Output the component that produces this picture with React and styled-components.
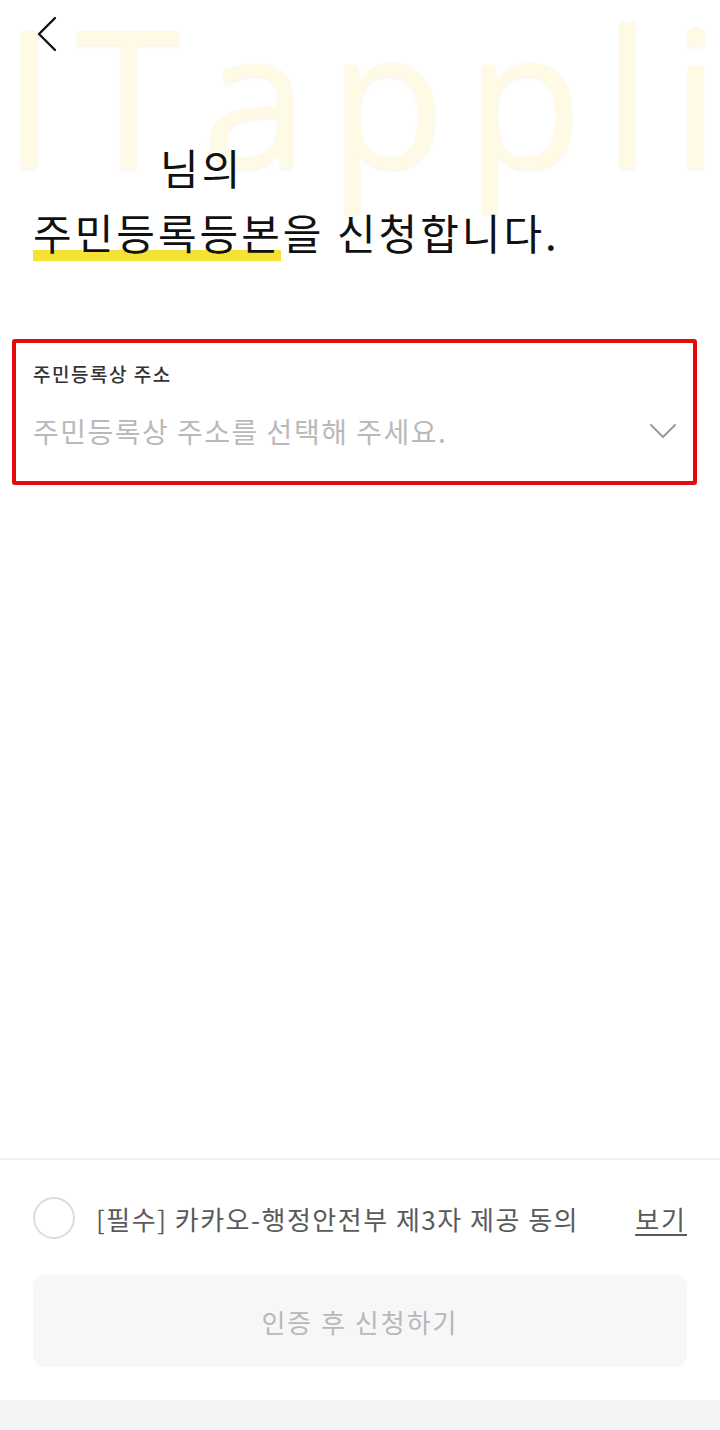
import React from "react";
import styled, { createGlobalStyle } from "styled-components";

const Global = createGlobalStyle`
  html, body {
    margin: 0;
    padding: 0;
    background: #ffffff;
  }
  body {
    font-family: "Noto Sans CJK KR", "Noto Sans", sans-serif;
    color: #111;
  }
`;

const Page = styled.div`
  position: relative;
  width: 720px;
  height: 1430px;
  display: flex;
  flex-direction: column;
  overflow: hidden;
  background: #fff;
`;

const Watermark = styled.div`
  position: absolute;
  left: 2px;
  top: -37px;
  font-family: "Open Sans", "Liberation Sans", sans-serif;
  font-size: 192px;
  font-weight: 400;
  letter-spacing: 20px;
  color: #fffae6;
  text-shadow: 0 2px 3px rgba(200, 190, 150, 0.16);
  pointer-events: none;
  white-space: nowrap;
  z-index: 0;
`;

const TopBar = styled.div`
  height: 68px;
  padding: 14px 0 0 30px;
  box-sizing: border-box;
  position: relative;
  z-index: 1;
`;

const Heading = styled.div`
  position: relative;
  z-index: 1;
  padding: 66px 0 0 33px;
  font-size: 42px;
  line-height: 65px;
  letter-spacing: 3px;
`;

const NameLine = styled.div`
  padding-left: 127px;
`;

const Marked = styled.span`
  position: relative;
  z-index: 0;

  &::after {
    content: "";
    position: absolute;
    left: 0;
    right: 2px;
    bottom: 1px;
    height: 11px;
    background: #f6e234;
    z-index: -1;
  }
`;

const SelectBox = styled.div`
  position: relative;
  z-index: 1;
  margin: 75px 23px 0 12px;
  border: 4px solid #e50a0a;
  border-radius: 3px;
  padding: 18px 16px 32px 17px;
  display: flex;
  flex-direction: column;
  gap: 26px;
`;

const FieldLabel = styled.div`
  font-size: 19px;
  font-weight: 500;
  color: #333;
  line-height: 26px;
  letter-spacing: 1.5px;
`;

const FieldRow = styled.div`
  display: flex;
  align-items: center;
  justify-content: space-between;
`;

const Placeholder = styled.div`
  font-size: 28px;
  color: #b9b9b9;
  line-height: 36px;
  letter-spacing: 1.5px;
`;

const Spacer = styled.div`
  flex: 1;
`;

const Footer = styled.div`
  border-top: 2px solid #f3f3f3;
  padding: 37px 33px 33px 33px;
  display: flex;
  flex-direction: column;
  gap: 36px;
`;

const AgreeRow = styled.div`
  display: flex;
  align-items: center;
`;

const Circle = styled.div`
  width: 38px;
  height: 38px;
  border: 2px solid #dcdcdc;
  border-radius: 50%;
  flex-shrink: 0;
`;

const AgreeText = styled.div`
  margin-left: 21px;
  font-size: 26px;
  color: #5a5a5a;
  letter-spacing: 1.5px;
  flex: 1;
`;

const ViewLink = styled.a`
  font-size: 26px;
  color: #5a5a5a;
  letter-spacing: 2px;
  text-decoration: underline;
  text-underline-offset: 4px;
`;

const SubmitButton = styled.button`
  height: 92px;
  border: none;
  border-radius: 12px;
  background: #f7f7f8;
  color: #b8b8b8;
  font-family: inherit;
  font-size: 26px;
  letter-spacing: 2px;
`;

const NavBar = styled.div`
  height: 30px;
  background: #f4f4f6;
`;

export default function App() {
  return (
    <Page>
      <Global />
      <Watermark>ITappli</Watermark>
      <TopBar>
        <svg width="30" height="40" viewBox="0 0 30 40" fill="none">
          <path d="M25 4 L9 20 L25 36" stroke="#111" strokeWidth="2.4" strokeLinecap="round" strokeLinejoin="round" />
        </svg>
      </TopBar>
      <Heading>
        <NameLine>님의</NameLine>
        <div>
          <Marked>주민등록등본</Marked>을 신청합니다.
        </div>
      </Heading>
      <SelectBox>
        <FieldLabel>주민등록상 주소</FieldLabel>
        <FieldRow>
          <Placeholder>주민등록상 주소를 선택해 주세요.</Placeholder>
          <svg width="28" height="18" viewBox="0 0 28 18" fill="none">
            <path d="M2 3 L14 15 L26 3" stroke="#9a9a9a" strokeWidth="2" strokeLinecap="round" strokeLinejoin="round" />
          </svg>
        </FieldRow>
      </SelectBox>
      <Spacer />
      <Footer>
        <AgreeRow>
          <Circle />
          <AgreeText>[필수] 카카오-행정안전부 제3자 제공 동의</AgreeText>
          <ViewLink>보기</ViewLink>
        </AgreeRow>
        <SubmitButton>인증 후 신청하기</SubmitButton>
      </Footer>
      <NavBar />
    </Page>
  );
}
